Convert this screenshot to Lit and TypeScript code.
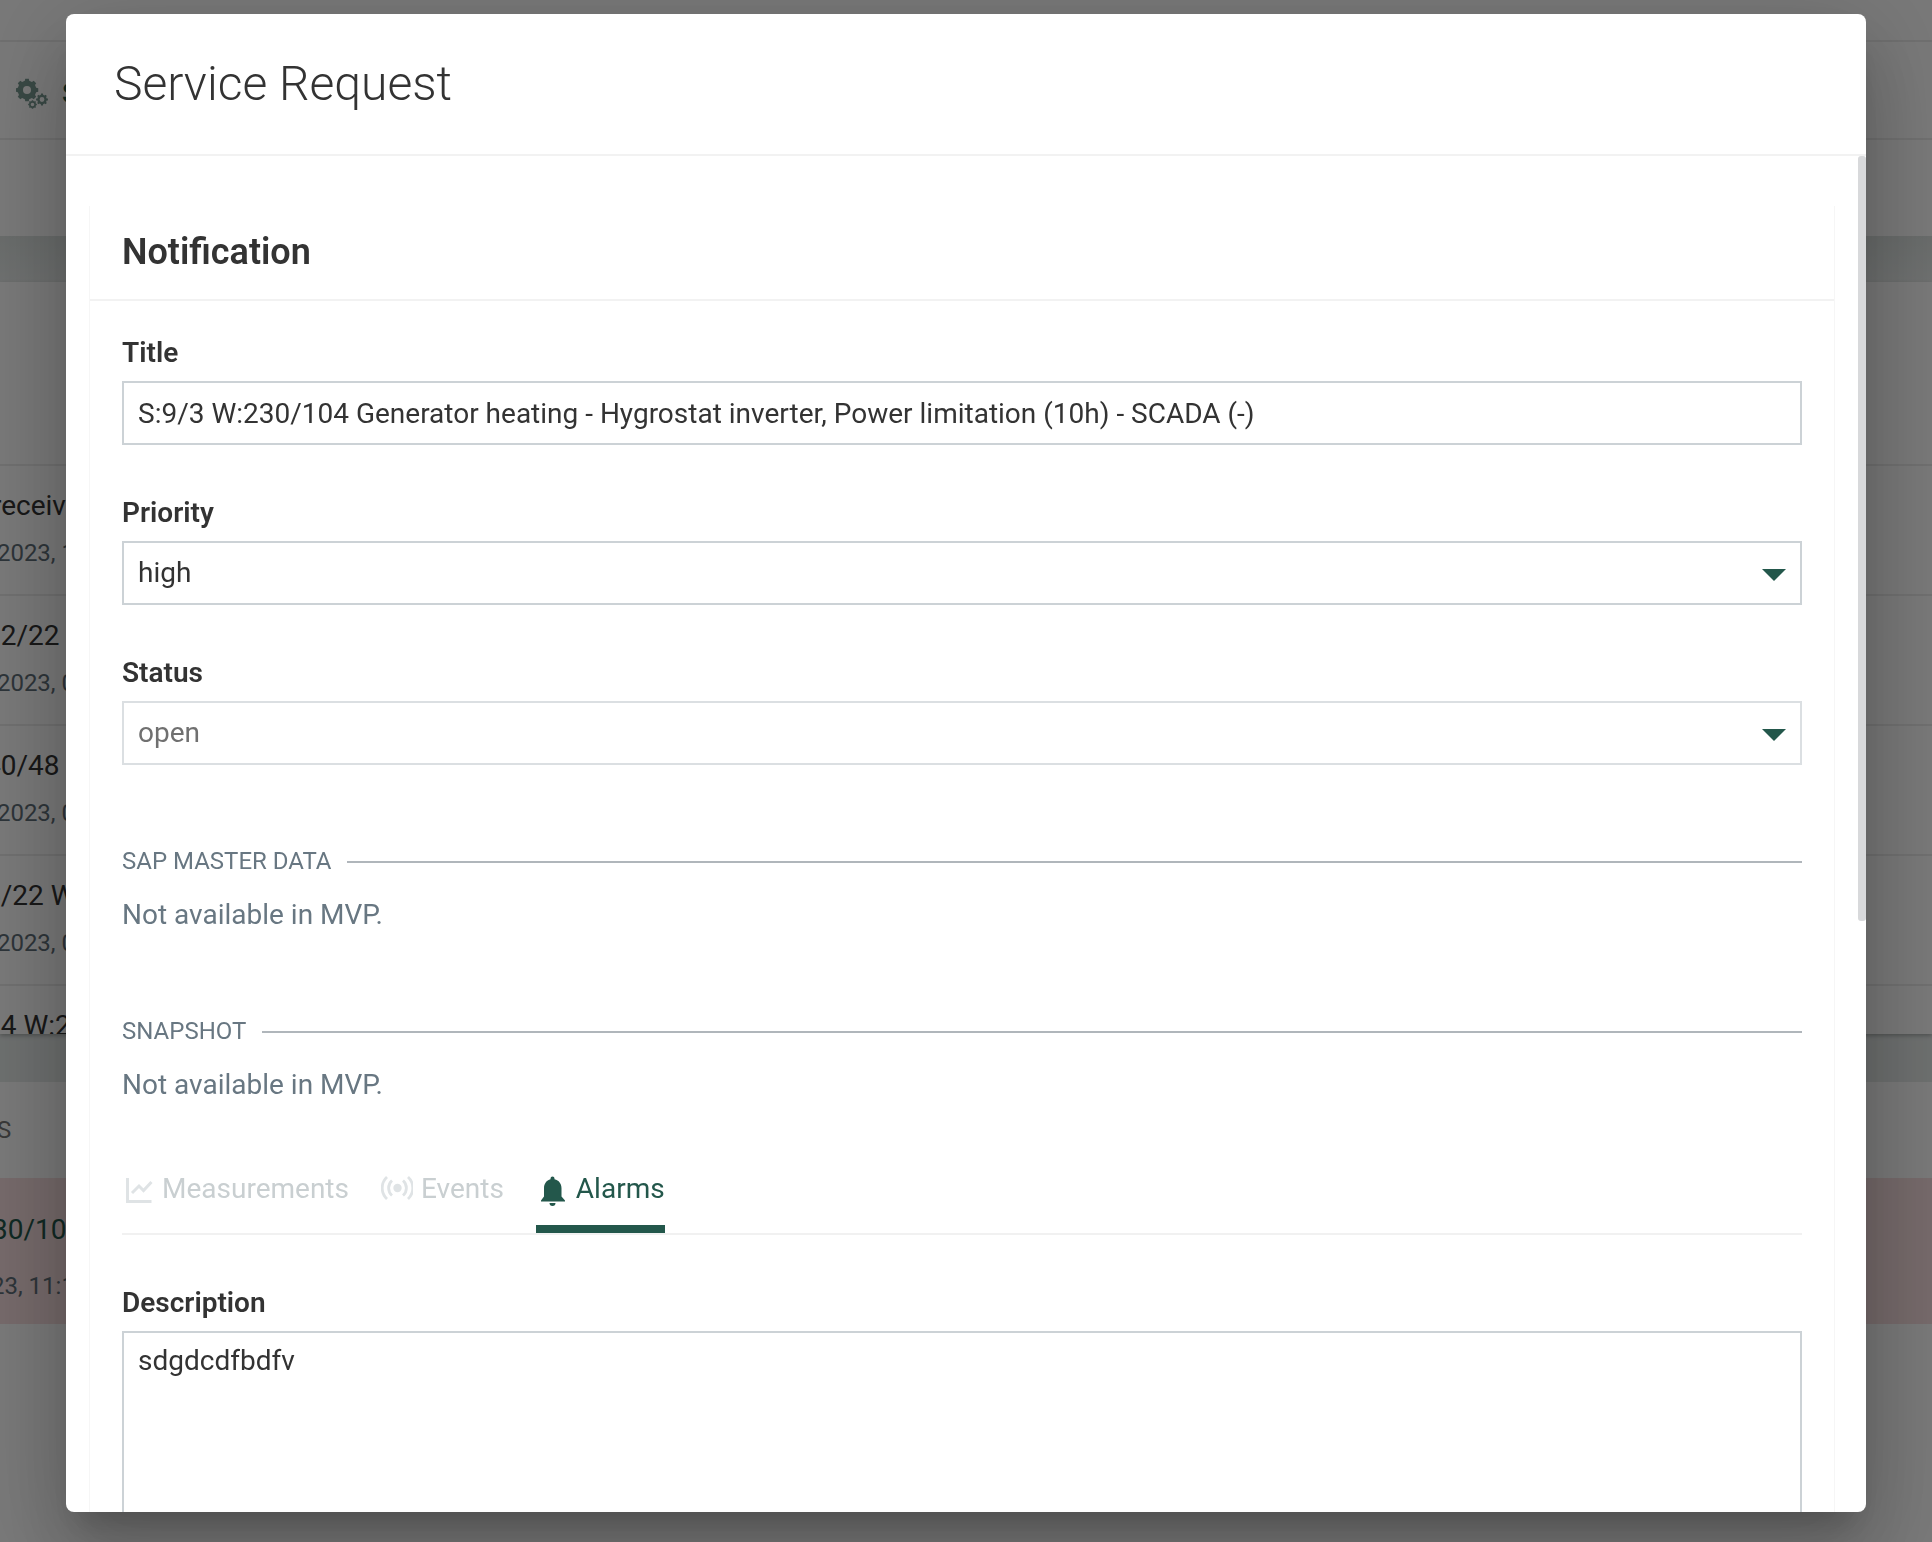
import { LitElement, html, css, svg } from "lit";
import { customElement } from "lit/decorators.js";

const NB = "\u00a0";

/** Closed outline of a cog with square teeth. */
function cog(cx: number, cy: number, teeth: number, outer: number, inner: number, hole: number): string {
  const pts: string[] = [];
  const step = (Math.PI * 2) / teeth;
  for (let i = 0; i < teeth; i++) {
    const a = i * step - Math.PI / 2;
    const marks: [number, number][] = [
      [-0.3, inner],
      [-0.2, outer],
      [0.2, outer],
      [0.3, inner],
    ];
    for (const [k, r] of marks) {
      const t = a + k * step;
      pts.push(`${(cx + r * Math.cos(t)).toFixed(2)} ${(cy + r * Math.sin(t)).toFixed(2)}`);
    }
  }
  return `M${pts.join("L")}ZM${cx - hole} ${cy}a${hole} ${hole} 0 1 0 ${hole * 2} 0a${hole} ${hole} 0 1 0 ${-hole * 2} 0Z`;
}

const gears = html`<svg class="gears" viewBox="0 0 32 32" aria-hidden="true">
  ${svg`<path fill-rule="evenodd" d=${cog(11, 12, 8, 11.4, 9.4, 4)}></path>
  <path fill-rule="evenodd" d=${cog(26, 21.5, 8, 6, 4.8, 2.4)}></path>
  <path fill-rule="evenodd" d=${cog(16.5, 26.5, 8, 4.4, 3.6, 1.8)}></path>`}
</svg>`;

const chartIcon = html`<svg class="icon faint" viewBox="0 0 32 32" aria-hidden="true">
  <path d="M5.500 3v23.500H29.500" fill="none" stroke="currentColor" stroke-width="3"></path>
  <path d="M10 18l7-7 4.500 4.500 8-8.500" fill="none" stroke="currentColor" stroke-width="3"></path>
</svg>`;

const signalIcon = html`<svg class="icon faint" viewBox="0 0 32 32" aria-hidden="true">
  <circle cx="16.500" cy="13" r="4.200" fill="currentColor"></circle>
  <path d="M11 5.500a10 10 0 0 0 0 15M22 5.500a10 10 0 0 1 0 15M6 2a15 15 0 0 0 0 22M27 2a15 15 0 0 1 0 22" fill="none" stroke="currentColor" stroke-width="2.800"></path>
</svg>`;

const bellIcon = html`<svg class="icon" viewBox="0 0 32 32" aria-hidden="true">
  <path fill="currentColor" d="M16.500 1.500a2 2 0 0 1 2 2v.700c4.500 1 7 4.500 7 9v8.300l3.500 4v1H5v-1l3-4v-8.300c0-4.500 2.500-8 6.500-9v-.700a2 2 0 0 1 2-2zM13.500 28h6a3 3 0 0 1-6 0z"></path>
</svg>`;

const caret = html`<svg class="caret" viewBox="0 0 24 12" aria-hidden="true"><path d="M0 0h24L12 12z"></path></svg>`;

const listRows = [
  { title: `${NB}receiv`, date: `${NB}${NB}2023, 1` },
  { title: "12/22", date: `${NB}${NB}2023, 0` },
  { title: "40/48", date: `${NB}${NB}2023, 0` },
  { title: "5/22 W", date: `${NB}${NB}2023, 0` },
  { title: "04 W:2", date: "" },
];

@customElement("app-root")
export class AppRoot extends LitElement {
  static styles = css`
    :host {
      display: block;
      font-family: Roboto, "Liberation Sans", sans-serif;
      font-size: 28px;
      line-height: 36px;
      color: #333;
    }
    * {
      box-sizing: border-box;
    }
    .page {
      height: 100vh;
      overflow: hidden;
      display: flex;
      flex-direction: column;
      isolation: isolate;
      background: #fff;
      white-space: nowrap;
    }
    .topbar {
      height: 42px;
      border-bottom: 2px solid #ececec;
    }
    .nav {
      height: 98px;
      display: flex;
      align-items: center;
      gap: 14px;
      padding: 8px 0 0 16px;
      border-bottom: 2px solid #ececec;
      color: #23574b;
      font-weight: 500;
    }
    .gears {
      width: 32px;
      height: 32px;
      fill: #7a9a92;
    }
    .subbar {
      height: 96px;
    }
    .band {
      height: 46px;
      background: linear-gradient(#dde3e1, #e9edec);
    }
    .list {
      height: 752px;
      padding-top: 182px;
      overflow: hidden;
      box-shadow: 0 2px 4px rgba(0, 0, 0, 0.25);
      z-index: 1;
    }
    .row {
      height: 130px;
      padding-top: 22px;
      border-top: 2px solid #ececec;
    }
    .shift {
      margin-left: -15px;
    }
    .date {
      font-size: 24px;
      line-height: 32px;
      color: #5f6e78;
      padding-top: 13px;
    }
    .gap {
      height: 48px;
      background: #e6ebea;
    }
    .caption {
      height: 96px;
      padding-top: 30px;
      font-size: 24px;
      color: #777;
    }
    .alert {
      height: 146px;
      padding-top: 34px;
      background: #f8dfe0;
      color: #23574b;
    }
    .alert .date {
      padding-top: 22px;
    }

    .overlay {
      position: fixed;
      inset: 0;
      z-index: 2;
      display: flex;
      justify-content: center;
      padding: 14px 32px 30px;
      background: rgba(0, 0, 0, 0.53);
    }
    .dialog {
      flex: 1;
      max-width: 1800px;
      display: flex;
      flex-direction: column;
      overflow: hidden;
      border-radius: 8px;
      background: #fff;
      box-shadow: 0 22px 30px -14px rgba(0, 0, 0, 0.2), 0 48px 76px 6px rgba(0, 0, 0, 0.14),
        0 18px 92px 16px rgba(0, 0, 0, 0.12);
    }
    .head {
      height: 142px;
      flex: none;
      padding: 40px 48px;
      border-bottom: 2px solid #f2f2f2;
    }
    h1 {
      margin: 0;
      font-size: 48px;
      line-height: 60px;
      font-weight: 300;
    }
    .body {
      flex: 1;
      min-height: 0;
      display: flex;
      overflow: hidden;
    }
    .scroll {
      flex: 1;
      min-width: 0;
      padding: 48px 24px;
      overflow: hidden;
    }
    .rail {
      width: 8px;
      flex: none;
    }
    .thumb {
      border-radius: 3px;
      background: #d8d9db;
    }
    .card {
      box-shadow: -1px 2px 0 #f6f6f6, 1px 2px 0 #f6f6f6;
      background: #fff;
    }
    h2 {
      margin: 0;
      padding: 25px 32px 24px;
      font-size: 36px;
      line-height: 46px;
      font-weight: 600;
      border-bottom: 2px solid #f2f2f2;
    }
    .content {
      padding: 32px;
    }
    .fields {
      display: grid;
      gap: 48px;
    }
    .field {
      display: grid;
      gap: 8px;
    }
    label {
      font-weight: 600;
      line-height: 40px;
    }
    input,
    select,
    textarea {
      width: 100%;
      margin: 0;
      font: inherit;
      color: #333;
      background: #fff;
      border: 2px solid #ccd2d6;
      border-radius: 0;
      outline: none;
      appearance: none;
    }
    input,
    select {
      height: 64px;
      padding: 0 14px;
    }
    select:disabled {
      opacity: 1;
      color: #707070;
      border-color: #dbdfe2;
    }
    textarea {
      display: block;
      height: 400px;
      padding: 10px 14px;
      resize: none;
    }
    .pick {
      display: grid;
      align-items: center;
    }
    .pick > * {
      grid-area: 1 / 1;
    }
    .caret {
      width: 24px;
      height: 12px;
      margin: 4px 16px 0 0;
      justify-self: end;
      fill: #23574b;
      pointer-events: none;
    }
    .group {
      padding-top: 80px;
      color: #687782;
    }
    .legend {
      display: flex;
      align-items: center;
      gap: 16px;
      margin: 0 0 18px;
      font-size: 24px;
      line-height: 32px;
      font-weight: 400;
    }
    .legend::after {
      content: "";
      flex: 1;
      height: 2px;
      margin-top: 2px;
      background: #b0b6bb;
    }
    .note {
      margin: 0;
      line-height: 40px;
    }
    .tabs {
      display: flex;
      gap: 32px;
      margin: 64px 0 48px;
      border-bottom: 2px solid #f1f1f1;
    }
    .tab {
      display: flex;
      gap: 8px;
      padding: 0 0 16px;
      border: 0;
      border-bottom: 8px solid transparent;
      background: none;
      font: inherit;
      line-height: 40px;
      color: #23574b;
    }
    .tab:disabled {
      color: #c9cfd1;
    }
    .tab.active {
      border-color: #23574b;
    }
    .icon {
      width: 32px;
      height: 32px;
      margin-top: 6px;
    }
    .faint {
      color: #dfe3e5;
    }
  `;

  render() {
    return html`
      <div class="page">
        <div class="topbar"></div>
        <nav class="nav">${gears}<span>S</span></nav>
        <div class="subbar"></div>
        <div class="band"></div>
        <div class="list">
          ${listRows.map(
            (r) => html`<div class="row">
              <div class="shift">${r.title}</div>
              <div class="shift date">${r.date}</div>
            </div>`
          )}
        </div>
        <div class="gap"></div>
        <div class="caption"><div class="shift">${NB}${NB}S</div></div>
        <div class="alert">
          <div class="shift">${NB}30/104</div>
          <div class="shift date">${NB}23, 11:1</div>
        </div>
      </div>
      <div class="overlay">
        <section class="dialog" role="dialog" aria-labelledby="dialog-title">
          <header class="head"><h1 id="dialog-title">Service Request</h1></header>
          <div class="body">
            <div class="scroll">
              <div class="card">
                <h2>Notification</h2>
                <div class="content">
                  <div class="fields">
                    <div class="field">
                      <label for="title">Title</label>
                      <input
                        id="title"
                        type="text"
                        value="S:9/3 W:230/104 Generator heating - Hygrostat inverter, Power limitation (10h) - SCADA (-)"
                      />
                    </div>
                    <div class="field">
                      <label for="priority">Priority</label>
                      <div class="pick">
                        <select id="priority"><option>high</option></select>${caret}
                      </div>
                    </div>
                    <div class="field">
                      <label for="status">Status</label>
                      <div class="pick">
                        <select id="status" disabled><option>open</option></select>${caret}
                      </div>
                    </div>
                  </div>
                  <section class="group">
                    <h3 class="legend">SAP MASTER DATA</h3>
                    <p class="note">Not available in MVP.</p>
                  </section>
                  <section class="group">
                    <h3 class="legend">SNAPSHOT</h3>
                    <p class="note">Not available in MVP.</p>
                  </section>
                  <div class="tabs" role="tablist">
                    <button class="tab" role="tab" disabled>${chartIcon}Measurements</button>
                    <button class="tab" role="tab" disabled>${signalIcon}Events</button>
                    <button class="tab active" role="tab" aria-selected="true">${bellIcon}Alarms</button>
                  </div>
                  <div class="field">
                    <label for="description">Description</label>
                    <textarea id="description" .value=${"sdgdcdfbdfv"}></textarea>
                  </div>
                </div>
              </div>
            </div>
            <div class="rail"><div class="thumb" style="height: 56.4%"></div></div>
          </div>
        </section>
      </div>
    `;
  }
}
